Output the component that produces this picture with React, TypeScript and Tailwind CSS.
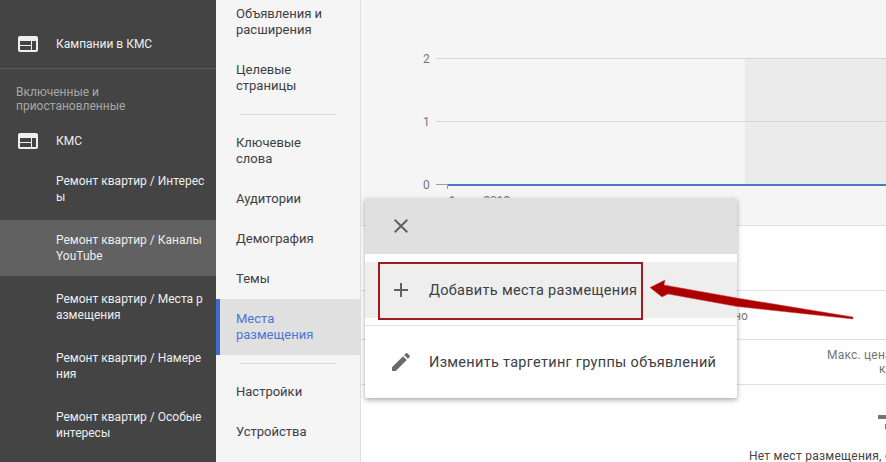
function WebIcon() {
  return (
    <svg width="24" height="24" viewBox="0 0 24 24" fill="#eeeeee">
      <path d="M20 4H4c-1.1 0-2 .99-2 2L2 18c0 1.1.9 2 2 2h16c1.1 0 2-.9 2-2V6c0-1.01-.9-2-2-2zm-5 14H4v-4h11v4zm0-5H4V9h11v4zm5 5h-4V9h4v9z" />
    </svg>
  );
}

const groups = [
  { name: "Ремонт квартир / Интересы" },
  { name: "Ремонт квартир / Каналы YouTube", active: true },
  { name: "Ремонт квартир / Места размещения" },
  { name: "Ремонт квартир / Намерения" },
  { name: "Ремонт квартир / Особые интересы" },
];

function Sidebar() {
  return (
    <div className="w-[216px] shrink-0 bg-[#444444] text-[#eeeeee] overflow-hidden">
      <div className="h-[69px] border-b border-[#5c5c5c] pt-[32px] pl-4 flex items-start">
        <WebIcon />
        <span className="ml-4 text-[12px] leading-6">Кампании в КМС</span>
      </div>
      <div className="pt-4 pl-4 text-[12px] leading-[14px] text-[#a8a8a8]">
        Включенные и
        <br />
        приостановленные
      </div>
      <div className="mt-4 h-6 pl-4 flex items-center">
        <WebIcon />
        <span className="ml-4 text-[12px] leading-6">КМС</span>
      </div>
      <div className="mt-[8px] flex flex-col gap-[3px]">
        {groups.map((g) => (
          <div
            key={g.name}
            className={`h-14 pl-14 flex items-center ${g.active ? "bg-[#616161]" : ""}`}
          >
            <span className="w-[150px] text-[12px] leading-4 break-all">{g.name}</span>
          </div>
        ))}
      </div>
    </div>
  );
}

function NavItem({ label, active }: { label: string; active?: boolean }) {
  const two = label.includes(" ");
  return (
    <div
      className={`flex items-center pr-4 text-[13px] leading-4 ${two ? "h-14" : "h-10"} ${
        active ? "bg-[#e0e0e0] text-[#4a76d4] border-l-4 border-[#3d6bd0] pl-4" : "text-[#3c4043] pl-5"
      }`}
    >
      <span className="w-[100px]">{label}</span>
    </div>
  );
}

function NavDivider() {
  return <div className="ml-6 w-[96px] h-px my-2 bg-[#dadada]" />;
}

function Nav() {
  return (
    <div className="w-[144px] shrink-0 bg-[#f5f5f5] overflow-hidden">
      <div className="-mt-[6px]">
        <NavItem label="Объявления и расширения" />
        <NavItem label="Целевые страницы" />
        <NavDivider />
        <NavItem label="Ключевые слова" />
        <NavItem label="Аудитории" />
        <NavItem label="Демография" />
        <NavItem label="Темы" />
        <NavItem label="Места размещения" active />
        <NavDivider />
        <NavItem label="Настройки" />
        <NavItem label="Устройства" />
      </div>
    </div>
  );
}

function Chart() {
  return (
    <svg width="525" height="225" className="block">
      <rect x="384" y="58" width="141" height="126" fill="#ebebeb" />
      <line x1="75" x2="525" y1="58.5" y2="58.5" stroke="#d6d6d6" />
      <line x1="75" x2="525" y1="121.5" y2="121.5" stroke="#d6d6d6" />
      <line x1="75" x2="87" y1="184.5" y2="184.5" stroke="#9e9e9e" />
      <line x1="86.5" x2="86.5" y1="185" y2="189" stroke="#9e9e9e" />
      <line x1="87" x2="525" y1="185" y2="185" stroke="#4f79c6" strokeWidth="2" />
      <g fontSize="12" fill="#757575">
        <text x="62" y="63">2</text>
        <text x="62" y="126">1</text>
        <text x="62" y="189">0</text>
        <text x="88" y="205">1 авг. 2019 г.</text>
      </g>
    </svg>
  );
}

function Main() {
  return (
    <div className="flex-1 min-w-0 border-l border-[#e0e0e0] overflow-hidden">
      <div className="bg-[#f5f5f5] h-[225px]">
        <Chart />
      </div>
      <div className="h-[65px] border-t border-[#e0e0e0]" />
      <div className="h-[49px] border-t border-[#e0e0e0] pt-[17px] pl-[373px] text-[12px] leading-4 text-[#757575]">
        но
      </div>
      <div className="h-[45px] border-t border-[#e0e0e0] pt-[8px] pl-[466px] text-[12px] leading-[14px] tracking-[0.2px] text-[#757575] whitespace-nowrap">
        Макс. цена за
        <br />
        <span className="pl-[52px]">клик</span>
      </div>
      <div className="border-t border-[#e0e0e0] pt-[30px]">
        <div className="ml-[517px] w-[30px] h-[4px] bg-[#757575]" />
        <div className="ml-[524px] mt-[5px] w-[4px] h-[5px] bg-[#757575]" />
        <div className="mt-[19px] pl-[388px] text-[12px] tracking-[0.25px] leading-4 text-[#444444] whitespace-nowrap">
          Нет мест размещения, с которыми можно работать
        </div>
      </div>
    </div>
  );
}

function Popup() {
  return (
    <div className="absolute left-[365px] top-[198px] w-[372px] h-[200px] bg-white rounded-[2px] shadow-[0_2px_5px_rgba(0,0,0,0.35)]">
      <div className="h-14 bg-[#e0e0e0] rounded-t-[2px] flex items-center pl-6">
        <svg width="24" height="24" viewBox="0 0 24 24" fill="#616161">
          <path d="M19 6.41L17.59 5 12 10.59 6.41 5 5 6.41 10.59 12 5 17.59 6.41 19 12 13.41 17.59 19 19 17.59 13.41 12z" />
        </svg>
      </div>
      <div className="mt-2 h-14 bg-[#eeeeee] flex items-center pl-6 gap-4">
        <svg width="24" height="24" viewBox="0 0 24 24" fill="#616161">
          <path d="M19 13h-6v6h-2v-6H5v-2h6V5h2v6h6v2z" />
        </svg>
        <span className="pt-px text-[14.5px] tracking-[0.3px] text-[#3c4043]">Добавить места размещения</span>
      </div>
      <div className="mt-[7px] mb-2 h-px bg-[#e0e0e0]" />
      <div className="h-14 flex items-center pl-6 gap-4">
        <svg width="24" height="24" viewBox="0 0 24 24" fill="#6b6b6b">
          <path d="M3 17.25V21h3.75L17.81 9.94l-3.75-3.75L3 17.25zM20.71 7.04c.39-.39.39-1.02 0-1.41l-2.34-2.34c-.39-.39-1.02-.39-1.41 0l-1.83 1.83 3.75 3.75 1.83-1.83z" />
        </svg>
        <span className="pt-px text-[14.5px] tracking-[0.3px] text-[#3c4043] whitespace-nowrap">
          Изменить таргетинг группы объявлений
        </span>
      </div>
    </div>
  );
}

export default function App() {
  return (
    <div className="relative w-[886px] h-[462px] flex overflow-hidden bg-white font-[Roboto,sans-serif]">
      <Sidebar />
      <Nav />
      <Main />
      <Popup />
      <div className="absolute left-[378px] top-[262px] w-[265px] h-[58px] border-2 border-[#a01c1c]" />
      <svg className="absolute left-0 top-0" width="886" height="462">
        <polygon
          points="650,287.5 665,280 664,285 737,298 853,317 853,319 737,306.5 668,294 662,297"
          fill="#ad0000"
          stroke="#c75050"
          strokeWidth="0.5"
        />
      </svg>
    </div>
  );
}
